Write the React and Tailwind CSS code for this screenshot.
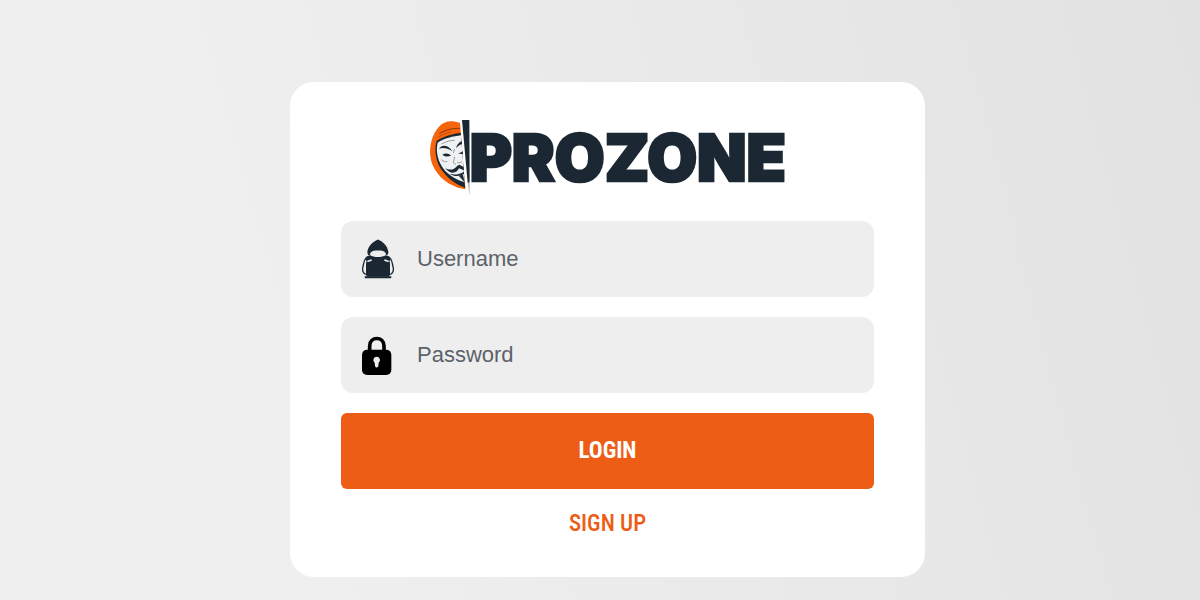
import React, { useState } from 'react';

function Logo() {
  return (
    <svg viewBox="0 0 1068 228" className="w-full max-w-[356px] overflow-visible" role="img" aria-label="Prozone">
      {/* Hood */}
      <path d="M90 9 C64 -1 42 3 27 20 C6 42 -2 78 1 108 C5 151 45 199 106 208 Z" fill="#f6640d" />
      <path d="M92 38 C70 42 46 46 20 62 C11 92 19 130 38 154 C57 180 80 194 106 204 L104 188 Z" fill="#1b2833" />
      <path d="M28 41 C46 29 66 25 90 25" fill="none" stroke="#8c3510" strokeWidth="3" />
      <path d="M24 52 C38 42 50 38 62 36" fill="none" stroke="#a33f10" strokeWidth="2" />
      {/* Face */}
      <path d="M93 46 C70 49 42 55 23 68 C16 96 25 126 41 147 C57 167 80 180 104 187 Z" fill="#f0f1f2" />
      <g fill="#1b2833">
        <path d="M27 86 C36 73 54 74 67 94 C52 84 39 82 27 86 Z" />
        <path d="M78 84 C82 72 88 66 95 63 L96 72 C88 75 83 80 78 84 Z" />
        <path d="M37 104 C47 98 56 100 63 107 C53 111 44 110 37 104 Z" />
        <path d="M85 101 L98 94 L99 102 Z" />
        <path d="M45 143 C61 154 74 148 82 137 L88 134 L101 141 L102 151 L87 145 C80 161 60 164 45 143 Z" />
        <path d="M58 161 C74 166 89 163 102 155 L102 162 C89 170 72 170 58 161 Z" />
        <path d="M86 167 L99 164 L104 187 Z" />
      </g>
      <g fill="none" stroke="#6b737a" strokeWidth="2">
        <path d="M74 87 L70 99 M74 110 L70 128 L78 134" />
        <path d="M34 119 C39 124 45 126 52 125" />
        <path d="M35 72 C48 64 60 61 74 61" />
        <path d="M81 126 L87 129 L96 125" />
      </g>
      {/* Blade */}
      <path d="M96 0 L118 0 L119 180 L118 188 L113 188 Z" fill="#1b2833" />
      <path d="M113 188 L119 188 L119 228 Z" fill="#b9bdc1" />
      <text
        x="119"
        y="182"
        fill="#1b2833"
        stroke="#1b2833"
        strokeWidth="8"
        fontSize="193"
        className="font-['Inter',sans-serif] font-black"
      >
        PROZONE
      </text>
    </svg>
  );
}

function HackerIcon() {
  return (
    <svg viewBox="0 0 96 117" className="h-10 w-8 shrink-0" aria-hidden="true">
      <g fill="#1b2833">
        <path d="M48 0 C31 7 18 21 16 38 C16 45 20 48 25 49 C22 39 28 33 48 33 C68 33 74 39 71 49 C77 47 80 43 79 37 C77 20 64 7 48 0 Z" />
        <path d="M25 47 C34 54 61 54 71 47 L86 58 L80 70 H16 L10 58 Z" />
        <rect x="12" y="64" width="72" height="48" rx="7" />
        <path d="M8 110 H88 V114 Q88 116 85 116 H11 Q8 116 8 114 Z" />
      </g>
      <path d="M22 50 C10 52 7 61 5 72 L2 86 C1 95 5 102 12 105 M74 50 C86 52 89 61 91 72 L94 86 C95 95 91 102 84 105" fill="none" stroke="#1b2833" strokeWidth="4" />
      <path d="M18 65 L27 62 M78 65 L69 62" stroke="#eeeeee" strokeWidth="5" strokeLinecap="round" />
    </svg>
  );
}

function LockIcon() {
  return (
    <svg viewBox="0 -5 96 120" className="h-10 w-8 shrink-0" aria-hidden="true">
      <path d="M23 46 V28 C23 -2 66 -2 66 28 V46" fill="none" stroke="#000" strokeWidth="11" />
      <rect y="39" width="88" height="76" rx="15" fill="#000" />
      <path d="M44 60 A10 10 0 0 1 50 78 L49 89 Q44 96 39 89 L38 78 A10 10 0 0 1 44 60 Z" fill="#eeeeee" />
    </svg>
  );
}

function Field({ icon, label, ...props }) {
  return (
    <label className="flex h-[76px] items-center gap-[23px] rounded-xl bg-[#eeeeee] px-[21px]">
      {icon}
      <input
        {...props}
        aria-label={label}
        placeholder={label}
        className="h-full w-full min-w-0 bg-transparent text-[22px] text-gray-900 outline-none placeholder:text-[#5c6269]"
      />
    </label>
  );
}

export default function App() {
  const [username, setUsername] = useState('');
  const [password, setPassword] = useState('');

  return (
    <div className="min-h-screen bg-[linear-gradient(75deg,#efefef_25%,#e2e2e2)] pt-[82px] pb-5 pl-[15px] font-['Liberation_Sans',Arial,sans-serif]">
      <main className="mx-auto w-full max-w-[635px] rounded-3xl bg-white px-[51px] py-[38px]">
        <div className="mb-[25px] flex justify-center">
          <Logo />
        </div>

        <form className="flex flex-col gap-5" onSubmit={(e) => e.preventDefault()}>
          <Field
            icon={<HackerIcon />}
            label="Username"
            type="text"
            value={username}
            onChange={(e) => setUsername(e.target.value)}
          />
          <Field
            icon={<LockIcon />}
            label="Password"
            type="password"
            value={password}
            onChange={(e) => setPassword(e.target.value)}
          />
          <button
            type="submit"
            className="h-[76px] rounded-md bg-[#ed5d16] font-['Roboto_Condensed',Roboto,sans-serif] text-[23px] font-bold text-white hover:bg-[#d9530f]"
          >
            LOGIN
          </button>
        </form>

        <div className="mt-5 text-center">
          <a
            href="#signup"
            className="font-['Roboto_Condensed',Roboto,sans-serif] text-[23px] leading-[30px] font-medium text-[#ed5d16]"
          >
            SIGN UP
          </a>
        </div>
      </main>
    </div>
  );
}
